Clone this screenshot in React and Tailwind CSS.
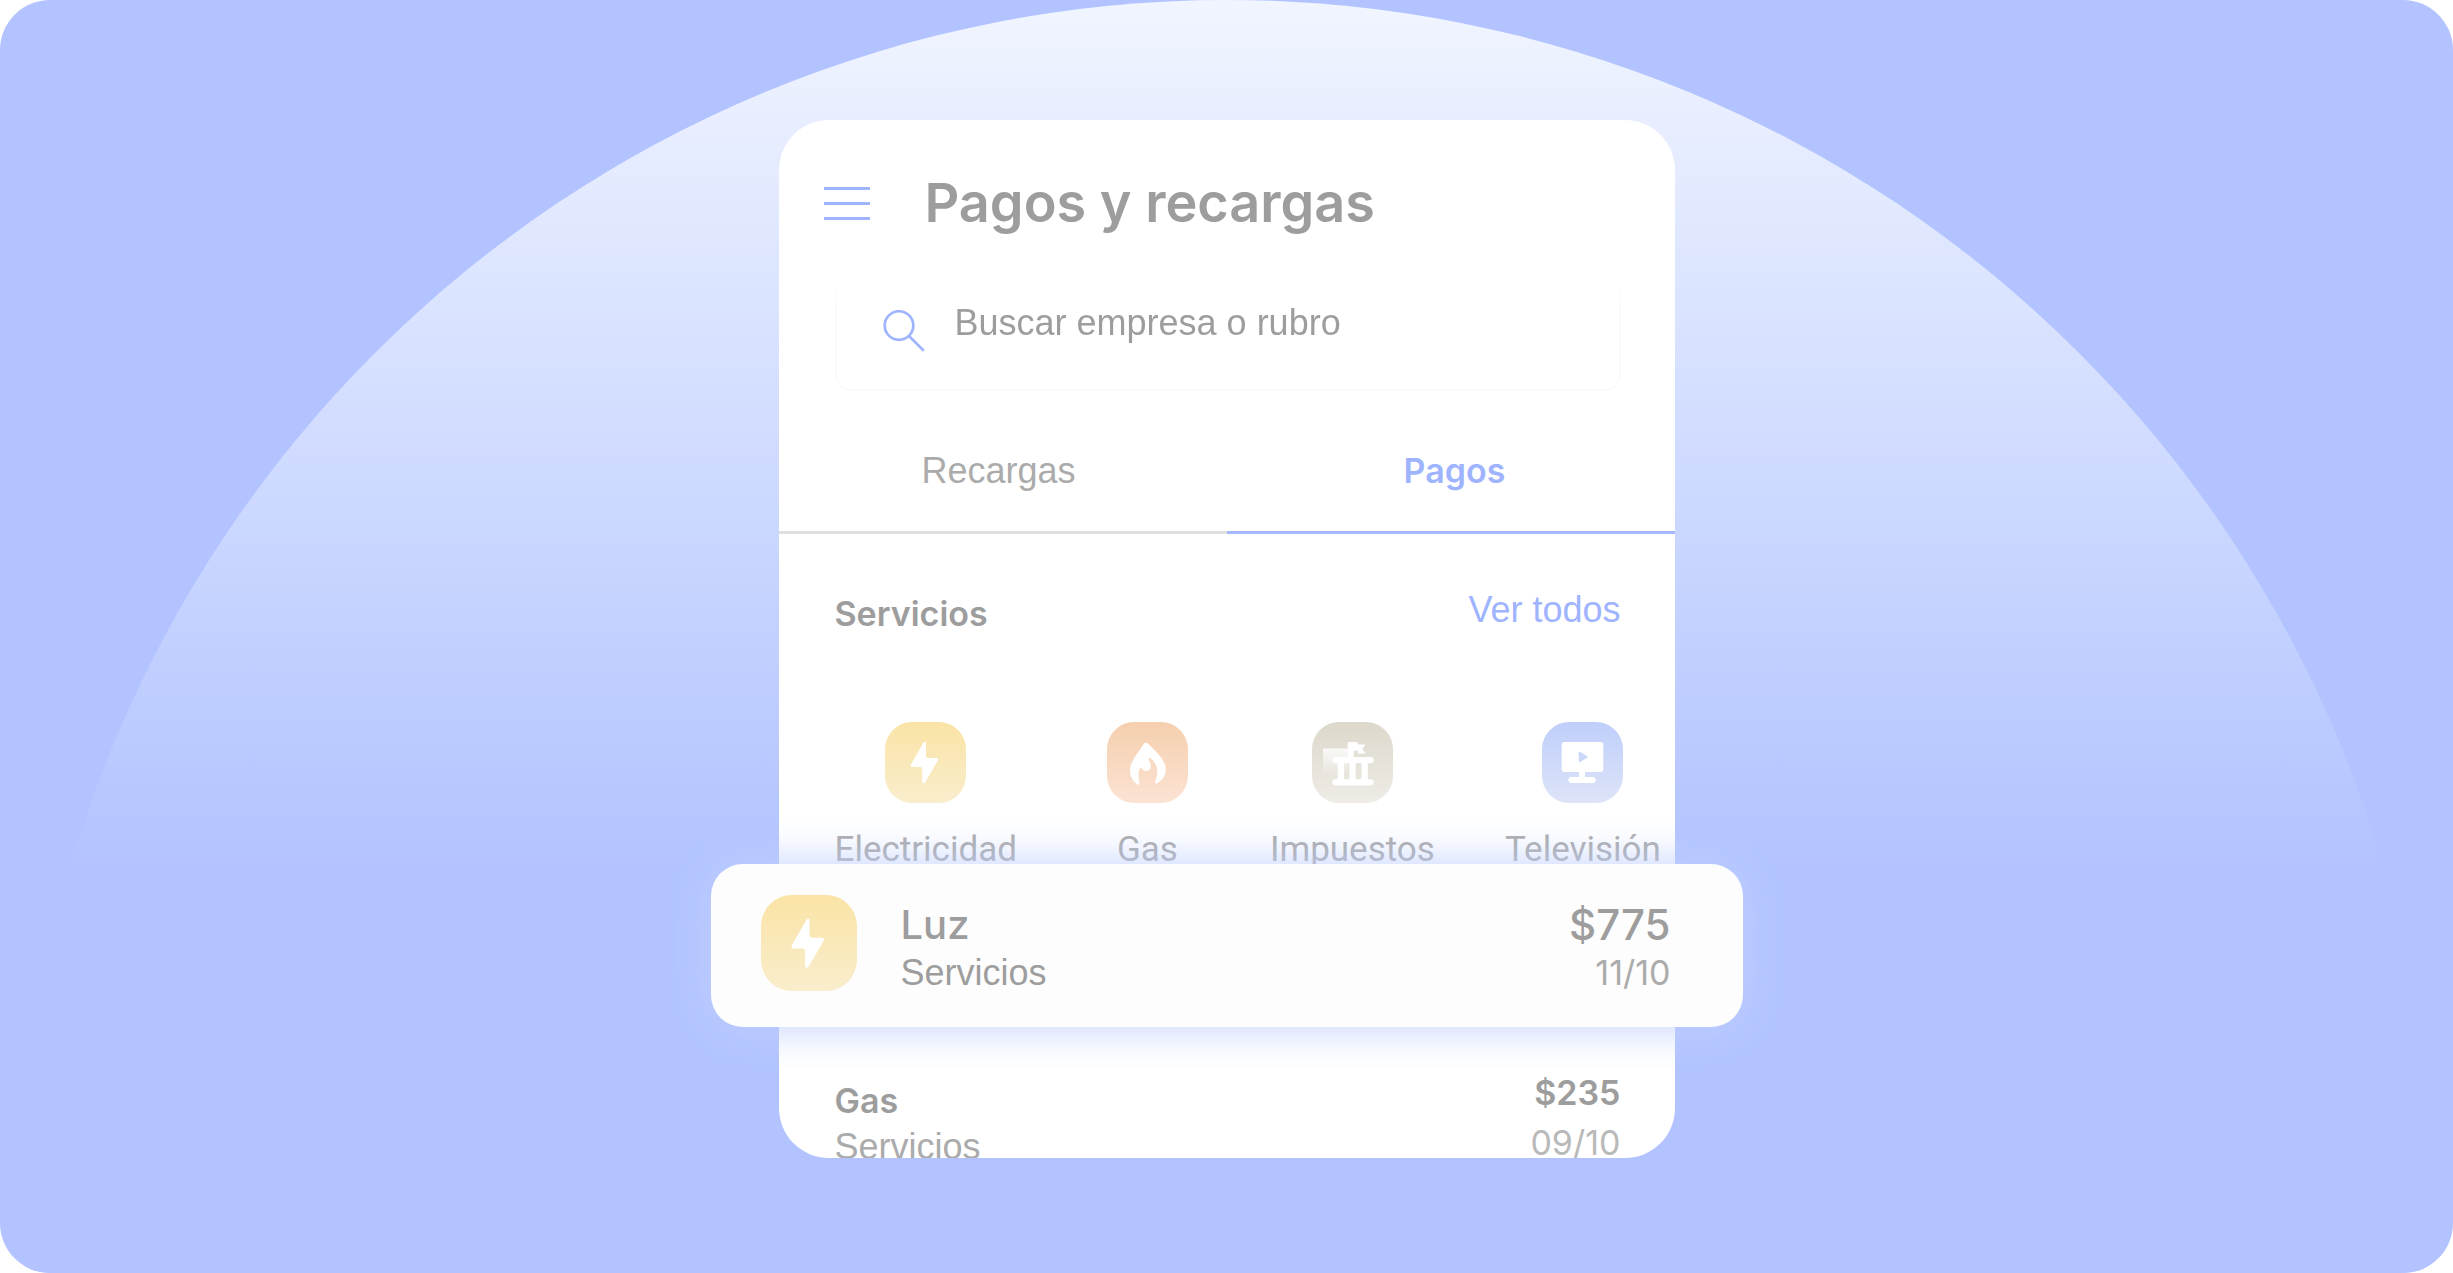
import React from "react";

function BoltGlyph() {
  return (
    <svg viewBox="0 0 81 81" className="size-full" fill="#fff" aria-hidden="true">
      <path d="M38.4 20.8 26 42.4c-.8 1.4 0 2.7 1.4 2.7H35c1.5 0 2.2.8 2.2 2.2v12.3c0 2 1.9 2.5 2.9.9l12.8-22c.8-1.3 0-2.5-1.5-2.5h-8.1c-1.5 0-2.3-.8-2.3-2.3V21.7c0-2-1.8-2.5-2.6-.9Z" />
    </svg>
  );
}

function FlameGlyph() {
  return (
    <svg viewBox="0 0 81 81" className="size-full" fill="#fff" aria-hidden="true">
      <path d="M38.6 20.7c-1 0-1.600.5-2 1.300C33 29 23 38.500 23 48.500c0 6 3.300 11.200 7.300 14 1.300.9 2.600 0 2.200-1.500-1.500-5.500-1.500-10.500.6-14.800.4-.9 1.200-.9 1.700 0 1 1.800 2.500 3 4.700 2.900 2.700-.1 4.500-2.200 4.400-5-.1-2.500-.9-4-2-6-.8-1.500.8-2.700 2-1.600 4.200 3.600 6.400 8.500 6.400 13.500 0 3.200-.8 6-2 8.800-.7 1.600.5 3.200 2 2.400 4.700-2.700 8.500-7.500 8.500-13.700 0-9-9-17.500-18-26-.7-.6-1.400-.8-2.200-.8Z" />
    </svg>
  );
}

function BankGlyph() {
  return (
    <svg viewBox="0 0 81 81" className="size-full" fill="#fff" aria-hidden="true">
      <defs>
        <linearGradient id="bank-glow" x1="0" y1="0" x2="0" y2="1">
          <stop offset="0" stopColor="#fff" stopOpacity="0.85" />
          <stop offset="1" stopColor="#fff" stopOpacity="0" />
        </linearGradient>
      </defs>
      <rect x="11" y="26.500" width="25" height="27" fill="url(#bank-glow)" />
      <path d="M35.700 36V21.500c0-1 .5-1.500 1.500-1.500H44c1.500 0 2 1.300 2 2.600h7.300l-2.800 4.400 2.800 4.400H46v-2.600h-4.300V36Z" />
      <rect x="20.300" y="35" width="41.400" height="6.200" rx="3.100" />
      <rect x="20.300" y="57.200" width="41.400" height="6.200" rx="3.100" />
      <path d="M25.700 40.500H32V58h-6.300zM37.400 40.500h6.300V58h-6.300zM49.500 40.500h6.300V58h-6.300z" />
    </svg>
  );
}

function TvGlyph() {
  return (
    <svg viewBox="0 0 81 81" className="size-full" fill="#fff" aria-hidden="true">
      <path
        fillRule="evenodd"
        d="M22.200 20h36.600c1.500 0 2.500 1 2.500 2.500v24.900c0 1.500-1 2.500-2.500 2.500H43V55h7.800a3 3 0 0 1 0 6H29.400a3 3 0 0 1 0-6H37v-5.100H22.200c-1.500 0-2.500-1-2.500-2.500V22.500c0-1.500 1-2.500 2.500-2.500Zm16.200 10c-.8-.5-1.600-.2-1.600.7v8.600c0 .9.8 1.200 1.600.7l6.800-4.300c.8-.5.8-1 0-1.500Z"
      />
    </svg>
  );
}

const services = [
  { name: "Electricidad", Glyph: BoltGlyph, tile: "from-[#fae3a5] to-[#f9edcc]", space: "" },
  { name: "Gas", Glyph: FlameGlyph, tile: "from-[#f5cfae] to-[#fbe3d3]", space: "ml-[90px]" },
  { name: "Impuestos", Glyph: BankGlyph, tile: "from-[#dcd8cb] to-[#efece6]", space: "ml-[82px]" },
  { name: "Televisión", Glyph: TvGlyph, tile: "from-[#bfcffb] to-[#dee4f7]", space: "ml-[70px]" },
];

export default function App() {
  return (
    <div className="relative min-h-screen w-full overflow-hidden rounded-[50px] bg-[#b2c3ff] px-20 pt-[120px] pb-[115px] font-['Liberation_Sans',sans-serif] text-4xl text-[#9d9d9d]">
      <div className="absolute top-0 left-1/2 aspect-square w-[98.25%] -translate-x-1/2 rounded-full bg-linear-to-b from-[#f1f5ff] to-[#b2c3ff] to-36%" />

      <main className="relative mx-auto w-full max-w-[896px] rounded-[50px] bg-white">
        <header className="flex items-center gap-[55px] pt-[53px] pl-[45px]">
          <button type="button" aria-label="Menú" className="flex w-[46px] flex-col gap-3">
            <span className="h-[3px] w-full bg-[#9fb4ff]" />
            <span className="h-[3px] w-full bg-[#9fb4ff]" />
            <span className="h-[3px] w-full bg-[#9fb4ff]" />
          </button>
          <h1 className="font-['Inter',sans-serif] text-[54px] leading-[60px] font-semibold">
            Pagos y recargas
          </h1>
        </header>

        <label className="mr-[54px] ml-14 mt-6 flex h-[134px] items-center gap-[30px] rounded-b-2xl border-x-2 border-b-2 border-[#fbfbfb] pl-[46px] [mask-image:linear-gradient(to_bottom,transparent_15%,black_40%)]">
          <svg
            viewBox="0 0 42 42"
            className="mt-4 size-[42px] shrink-0"
            fill="none"
            stroke="#9fb4ff"
            strokeWidth="2.700"
            strokeLinecap="round"
            aria-hidden="true"
          >
            <circle cx="16" cy="15.500" r="14.300" />
            <path d="M26.500 26.500 40 40" />
          </svg>
          <input
            type="search"
            aria-label="Buscar empresa o rubro"
            placeholder="Buscar empresa o rubro"
            className="h-12 min-w-0 flex-1 bg-transparent outline-none placeholder:text-[#9d9d9d] placeholder:opacity-100"
          />
        </label>

        <div role="tablist" className="grid grid-cols-2 leading-10">
          <button
            type="button"
            role="tab"
            aria-selected="false"
            className="border-b-3 border-[#e0e0e0] pt-15 pr-2 pb-10 text-[#ababab]"
          >
            Recargas
          </button>
          <button
            type="button"
            role="tab"
            aria-selected="true"
            className="border-b-3 border-[#a6b9ff] pt-15 pb-10 pl-2 font-['Inter',sans-serif] text-[34px] font-semibold text-[#9fb4ff]"
          >
            Pagos
          </button>
        </div>

        <section>
          <div className="flex items-start justify-between pt-14 pr-[54px] pl-14">
            <h2 className="font-['Inter',sans-serif] text-[34px] leading-12 font-semibold">
              Servicios
            </h2>
            <a href="#todos" className="leading-10 text-[#9fb4ff]">
              Ver todos
            </a>
          </div>
          <ul className="mt-[84px] flex pl-14 font-['Roboto',sans-serif] text-[35px] text-[#ababab]">
            {services.map(({ name, Glyph, tile, space }) => (
              <li key={name} className={`flex flex-col items-center gap-[25px] ${space}`}>
                <span className={`size-[81px] rounded-[27px] bg-linear-to-b ${tile}`}>
                  <Glyph />
                </span>
                <span className="leading-11">{name}</span>
              </li>
            ))}
          </ul>
        </section>

        <article className="relative z-10 -mx-[68px] -mt-2 flex h-[163px] items-start rounded-[32px] bg-[#fdfdfd] pr-[72px] pl-[50px] shadow-[0_0_45px_rgb(193,208,255)]">
          <span className="mt-[31px] size-24 shrink-0 rounded-[31px] bg-linear-to-b from-[#fae3a5] to-[#f9edcc]">
            <BoltGlyph />
          </span>
          <div className="mt-[37px] ml-11 flex-1 leading-12">
            <h3 className="font-['Inter',sans-serif] text-[40px] leading-12 font-medium">Luz</h3>
            <p>Servicios</p>
          </div>
          <div className="mt-[37px] text-right font-['Inter',sans-serif] text-[34px] leading-12">
            <p className="text-[42px] leading-12 font-medium">$775</p>
            <p className="text-[#ababab]">11/10</p>
          </div>
        </article>

        <article className="flex h-[131px] items-start justify-between overflow-hidden rounded-b-[50px] pt-[41px] pr-[54px] pl-14">
          <div className="mt-[10px] leading-[46px]">
            <h3 className="font-['Inter',sans-serif] text-[34px] leading-[46px] font-semibold">
              Gas
            </h3>
            <p className="text-[#ababab]">Servicios</p>
          </div>
          <div className="text-right font-['Inter',sans-serif] text-[34px] leading-[50px]">
            <p className="font-semibold">$235</p>
            <p className="text-[#b9b9b9]">09/10</p>
          </div>
        </article>
      </main>
    </div>
  );
}
